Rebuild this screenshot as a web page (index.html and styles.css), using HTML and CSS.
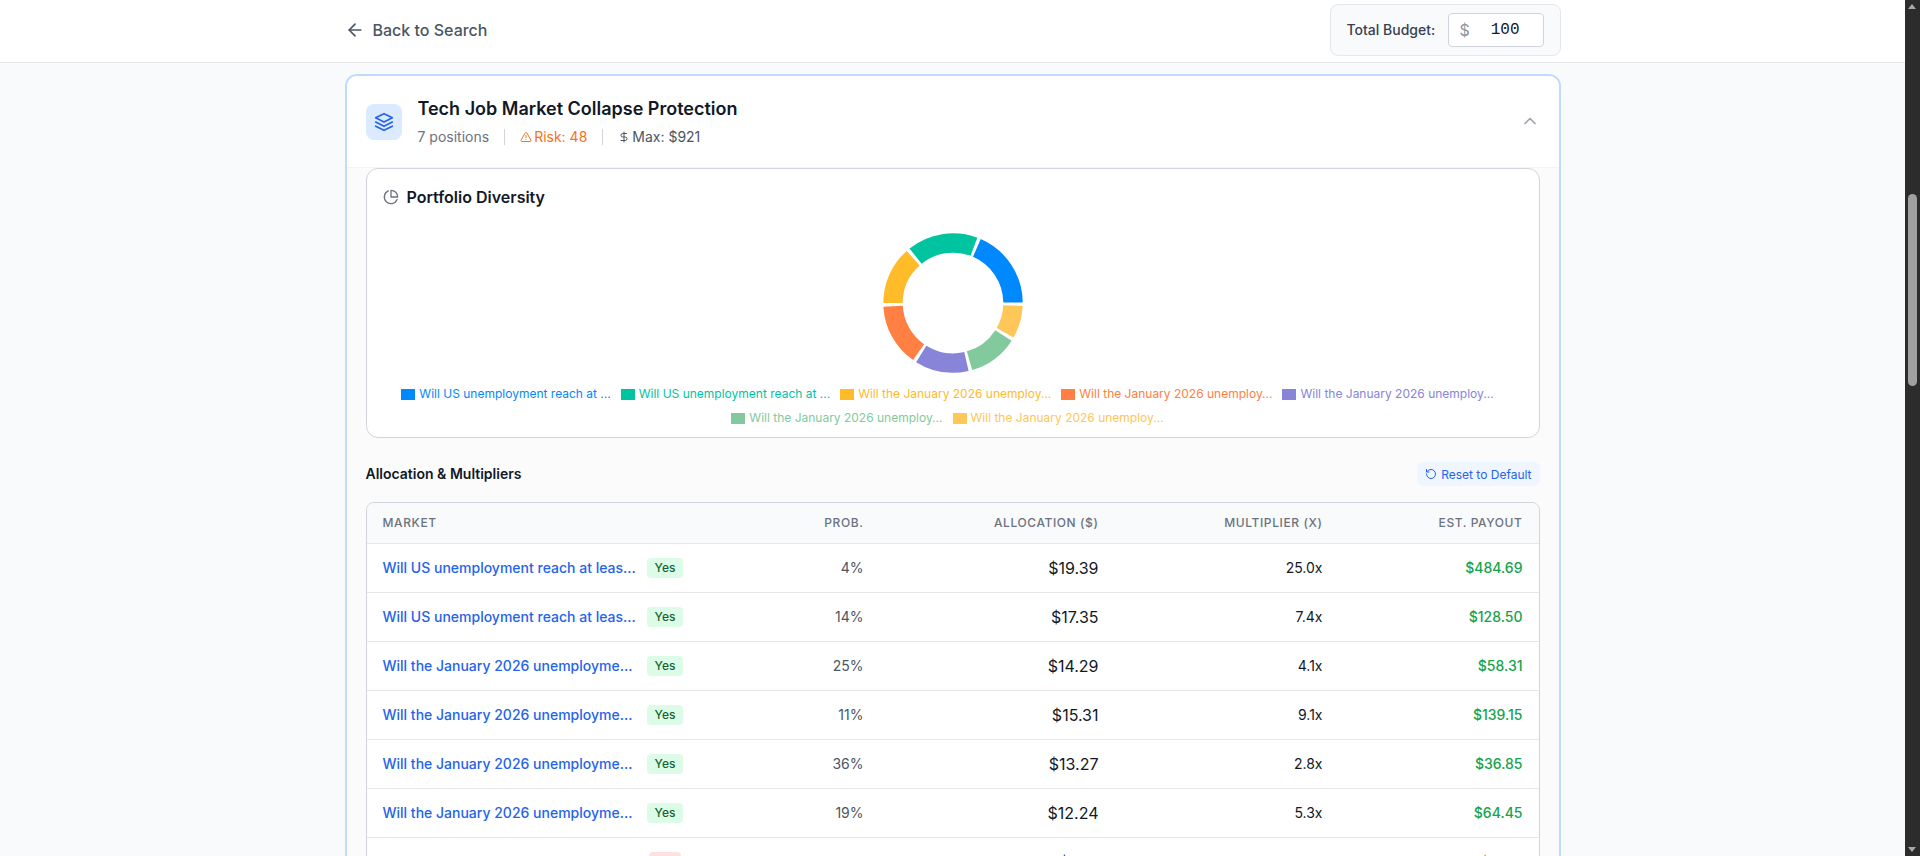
FILE: index.html
```html
<!DOCTYPE html>
<html lang="en">
<head>
<meta charset="utf-8">
<title>Tech Job Market Collapse Protection</title>
<link rel="stylesheet" href="styles.css">
</head>
<body>
<div class="window">
  <div class="page">
    <header class="topbar">
      <div class="topbar-inner">
        <a class="back">
          <svg class="ico-20" viewBox="0 0 24 24"><path d="m12 19-7-7 7-7"/><path d="M19 12H5"/></svg>
          <span>Back to Search</span>
        </a>
        <div class="budget">
          <span class="budget-label">Total Budget:</span>
          <div class="budget-input"><span class="budget-cur">$</span><span class="budget-val">100</span></div>
        </div>
      </div>
    </header>
    <main class="main">
      <section class="card">
        <div class="card-head">
          <div class="card-icon">
            <svg class="ico-20" viewBox="0 0 24 24"><path d="M12 2 2 7l10 5 10-5-10-5z"/><path d="m2 17 10 5 10-5"/><path d="m2 12 10 5 10-5"/></svg>
          </div>
          <div class="card-titles">
            <h2 class="card-title">Tech Job Market Collapse Protection</h2>
            <div class="meta">
              <span class="meta-muted">7 positions</span>
              <span class="meta-sep"></span>
              <span class="meta-item risk">
                <svg class="ico-12" viewBox="0 0 24 24"><path d="m21.73 18-8-14a2 2 0 0 0-3.48 0l-8 14A2 2 0 0 0 4 21h16a2 2 0 0 0 1.73-3"/><path d="M12 9v4"/><path d="M12 17h.01"/></svg>
                Risk: 48
              </span>
              <span class="meta-sep"></span>
              <span class="meta-item max">
                <svg class="ico-12" viewBox="0 0 24 24"><path d="M12 2v20"/><path d="M17 5H9.5a3.5 3.5 0 0 0 0 7h5a3.5 3.5 0 0 1 0 7H6"/></svg>
                Max: $921
              </span>
            </div>
          </div>
          <svg class="chevron" viewBox="0 0 24 24"><path d="m18 15-6-6-6 6"/></svg>
        </div>
        <div class="card-body">
          <div class="panel">
            <div class="panel-title">
              <svg class="ico-16" viewBox="0 0 24 24"><path d="M21.21 15.89A10 10 0 1 1 8 2.83"/><path d="M22 12A10 10 0 0 0 12 2v10z"/></svg>
              <span>Portfolio Diversity</span>
            </div>
            <div class="donut-wrap">
              <svg class="donut" viewBox="0 0 140 140">
                <circle class="seg seg-1" cx="70" cy="70" r="60" pathLength="360" stroke-dasharray="66.09 293.91" transform="rotate(-66.59 70 70)"/>
                <circle class="seg seg-2" cx="70" cy="70" r="60" pathLength="360" stroke-dasharray="59.03 300.97" transform="rotate(-128.62 70 70)"/>
                <circle class="seg seg-3" cx="70" cy="70" r="60" pathLength="360" stroke-dasharray="48.44 311.56" transform="rotate(-180.06 70 70)"/>
                <circle class="seg seg-4" cx="70" cy="70" r="60" pathLength="360" stroke-dasharray="51.97 308.03" transform="rotate(-235.03 70 70)"/>
                <circle class="seg seg-5" cx="70" cy="70" r="60" pathLength="360" stroke-dasharray="44.91 315.09" transform="rotate(-282.94 70 70)"/>
                <circle class="seg seg-6" cx="70" cy="70" r="60" pathLength="360" stroke-dasharray="41.35 318.65" transform="rotate(-327.29 70 70)"/>
                <circle class="seg seg-7" cx="70" cy="70" r="60" pathLength="360" stroke-dasharray="27.2 332.8" transform="rotate(-357.49 70 70)"/>
              </svg>
            </div>
            <ul class="legend">
              <li class="legend-item c1"><i class="swatch"></i>Will US unemployment reach at ...</li>
              <li class="legend-item c2"><i class="swatch"></i>Will US unemployment reach at ...</li>
              <li class="legend-item c3"><i class="swatch"></i>Will the January 2026 unemploy...</li>
              <li class="legend-item c4"><i class="swatch"></i>Will the January 2026 unemploy...</li>
              <li class="legend-item c5"><i class="swatch"></i>Will the January 2026 unemploy...</li>
              <li class="legend-item c6"><i class="swatch"></i>Will the January 2026 unemploy...</li>
              <li class="legend-item c7"><i class="swatch"></i>Will the January 2026 unemploy...</li>
            </ul>
          </div>
          <div class="alloc-head">
            <h3 class="alloc-title">Allocation &amp; Multipliers</h3>
            <button class="reset">
              <svg class="ico-12" viewBox="0 0 24 24"><path d="M3 12a9 9 0 1 0 9-9 9.75 9.75 0 0 0-6.74 2.74L3 8"/><path d="M3 3v5h5"/></svg>
              Reset to Default
            </button>
          </div>
          <div class="table-box">
            <table class="table">
              <colgroup><col class="col-market"><col class="col-prob"><col class="col-alloc"><col class="col-mult"><col class="col-pay"></colgroup>
              <thead>
                <tr><th class="left">Market</th><th>Prob.</th><th>Allocation ($)</th><th>Multiplier (x)</th><th>Est. Payout</th></tr>
              </thead>
              <tbody>
                <tr><td class="left"><div class="market"><a class="market-name">Will US unemployment reach at leas...</a><span class="slot"><span class="badge yes">Yes</span></span></div></td><td class="prob">4%</td><td class="alloc">$19.39</td><td class="mult">25.0x</td><td class="pay">$484.69</td></tr>
                <tr><td class="left"><div class="market"><a class="market-name">Will US unemployment reach at leas...</a><span class="slot"><span class="badge yes">Yes</span></span></div></td><td class="prob">14%</td><td class="alloc">$17.35</td><td class="mult">7.4x</td><td class="pay">$128.50</td></tr>
                <tr><td class="left"><div class="market"><a class="market-name">Will the January 2026 unemployme...</a><span class="slot"><span class="badge yes">Yes</span></span></div></td><td class="prob">25%</td><td class="alloc">$14.29</td><td class="mult">4.1x</td><td class="pay">$58.31</td></tr>
                <tr><td class="left"><div class="market"><a class="market-name">Will the January 2026 unemployme...</a><span class="slot"><span class="badge yes">Yes</span></span></div></td><td class="prob">11%</td><td class="alloc">$15.31</td><td class="mult">9.1x</td><td class="pay">$139.15</td></tr>
                <tr><td class="left"><div class="market"><a class="market-name">Will the January 2026 unemployme...</a><span class="slot"><span class="badge yes">Yes</span></span></div></td><td class="prob">36%</td><td class="alloc">$13.27</td><td class="mult">2.8x</td><td class="pay">$36.85</td></tr>
                <tr><td class="left"><div class="market"><a class="market-name">Will the January 2026 unemployme...</a><span class="slot"><span class="badge yes">Yes</span></span></div></td><td class="prob">19%</td><td class="alloc">$12.24</td><td class="mult">5.3x</td><td class="pay">$64.45</td></tr>
                <tr><td class="left"><div class="market"><a class="market-name">Will the January 2026 unemployme...</a><span class="slot"><span class="badge no">No</span></span></div></td><td class="prob">72%</td><td class="alloc">$8.15</td><td class="mult">1.4x</td><td class="pay">$11.32</td></tr>
              </tbody>
            </table>
          </div>
        </div>
      </section>
    </main>
  </div>
  <aside class="scrollbar">
    <span class="arrow-up"></span>
    <span class="thumb"></span>
    <span class="arrow-down"></span>
  </aside>
</div>
</body>
</html>
```
FILE: styles.css
```css
* { box-sizing: border-box; }
html, body { margin: 0; padding: 0; height: 856px; overflow: hidden; }
body { font-family: Inter, "Liberation Sans", sans-serif; background: #f9fafb; color: #111827; }
svg { fill: none; stroke: currentColor; stroke-width: 2; stroke-linecap: round; stroke-linejoin: round; flex: none; display: block; }
.ico-20 { width: 20px; height: 20px; }
.ico-16 { width: 16px; height: 16px; }
.ico-14 { width: 14px; height: 14px; }
.ico-12 { width: 12px; height: 12px; }

.window { display: flex; height: 856px; overflow: hidden; }
.page { flex: 1; min-width: 0; height: 856px; overflow: hidden; }

.topbar { height: 63px; padding-bottom: 2px; background: #fff; border-bottom: 1px solid #e5e7eb; }
.topbar-inner { width: 1216px; margin: 0 auto; height: 60px; display: flex; align-items: center; justify-content: space-between; }
.back { display: flex; align-items: center; gap: 8px; font-size: 16px; line-height: 24px; font-weight: 500; color: #4b5563; }
.budget { width: 231px; height: 52px; display: flex; align-items: center; justify-content: space-between; padding: 0 16px; background: #f9fafb; border: 1px solid #e5e7eb; border-radius: 8px; }
.budget-label { font-size: 14px; line-height: 20px; font-weight: 500; color: #374151; white-space: nowrap; }
.budget-input { width: 96px; height: 34px; display: flex; align-items: center; gap: 21px; padding-left: 11px; background: #fff; border: 1px solid #d1d5db; border-radius: 4px; }
.budget-cur { font-size: 16px; color: #8b93a1; }
.budget-val { font-family: "Liberation Mono", monospace; font-size: 16px; font-weight: 400; color: #111827; }

.main { width: 1216px; margin: 0 auto; padding-top: 11px; }
.card { background: #fff; border: 2px solid #bfdbfe; border-radius: 12px; overflow: hidden; }
.card-head { height: 92px; display: flex; align-items: center; gap: 16px; padding: 0 19px; background: #fff; border-bottom: 1px solid #f3f4f6; }
.card-icon { width: 36px; height: 36px; display: flex; align-items: center; justify-content: center; background: #dbeafe; color: #2563eb; border-radius: 8px; flex: none; }
.card-titles { flex: 1; min-width: 0; }
.card-title { margin: 0 0 5px; font-size: 18px; line-height: 26px; font-weight: 600; color: #111827; }
.meta { display: flex; align-items: center; gap: 15px; font-size: 14px; line-height: 20px; }
.meta-muted { color: #6b7280; }
.meta-sep { width: 1px; height: 16px; background: #d1d5db; }
.meta-item { display: flex; align-items: center; gap: 2px; }
.risk { color: #f97316; }
.max { color: #4b5563; }
.chevron { width: 20px; height: 20px; margin-bottom: 2px; color: #9ca3af; }

.card-body { padding: 0 19px 24px; background: #fbfbfc; }
.panel { background: #fff; border: 1px solid #d1d5db; border-radius: 12px; padding: 16px 16px 7px; height: 270px; }
.panel-title { display: flex; align-items: center; gap: 8px; font-size: 16px; line-height: 24px; font-weight: 600; color: #111827; }
.panel-title svg { color: #6b7280; }
.donut-wrap { margin-top: 24px; display: flex; justify-content: center; }
.donut { width: 140px; height: 140px; }
.seg { stroke-width: 19.4; stroke-linecap: butt; fill: none; }
.seg-1 { stroke: #0088fe; }
.seg-2 { stroke: #00c49f; }
.seg-3 { stroke: #ffbb28; }
.seg-4 { stroke: #ff8042; }
.seg-5 { stroke: #8884d8; }
.seg-6 { stroke: #82ca9d; }
.seg-7 { stroke: #ffc658; }
.legend { list-style: none; margin: 9px 0 0; padding: 0; display: flex; flex-wrap: wrap; justify-content: center; }
.legend-item { display: flex; align-items: center; gap: 4px; margin-right: 10px; font-size: 12px; line-height: 24px; white-space: nowrap; }
.swatch { width: 14px; height: 11px; background: currentColor; display: block; }
.c1 { color: #0088fe; }
.c2 { color: #00c49f; }
.c3 { color: #ffbb28; }
.c4 { color: #ff8042; }
.c5 { color: #8884d8; }
.c6 { color: #82ca9d; }
.c7 { color: #ffc658; }

.alloc-head { margin-top: 24px; height: 24px; display: flex; align-items: center; justify-content: space-between; }
.alloc-title { margin: 0; font-size: 14px; line-height: 20px; font-weight: 600; color: #111827; }
.reset { height: 24px; display: flex; align-items: center; gap: 4px; padding: 0 8px; background: #eff6ff; border: 0; border-radius: 6px; font-family: inherit; font-size: 12px; font-weight: 400; color: #2563eb; }

.table-box { margin-top: 16px; background: #fff; border: 1px solid #d1d5db; border-radius: 8px; overflow: hidden; }
.table { width: 1172px; border-collapse: collapse; table-layout: fixed; }
.col-market { width: 333px; }
.col-prob { width: 180px; }
.col-alloc { width: 235px; }
.col-mult { width: 224px; }
.col-pay { width: 200px; }
.table th { height: 40px; padding: 0 16px; text-align: right; font-size: 12px; font-weight: 500; letter-spacing: 0.05em; text-transform: uppercase; color: #6b7280; background: #f9fafb; border-bottom: 1px solid #e5e7eb; }
.table td { height: 49px; padding: 0 16px; text-align: right; border-bottom: 1px solid #e5e7eb; font-size: 14px; }
.table .left { text-align: left; padding-right: 0; }
.market { display: flex; align-items: center; }
.market-name { width: 258px; flex: none; font-size: 14px; font-weight: 500; color: #2563eb; white-space: nowrap; }
.slot { width: 49px; display: flex; justify-content: center; flex: none; }
.badge { height: 20px; padding: 0 8px; border-radius: 4px; font-size: 12px; line-height: 20px; font-weight: 500; }
.yes { background: #dcfce7; color: #166534; }
.no { background: #fee2e2; color: #991b1b; }
.prob { color: #4b5563; }
.table .alloc { font-size: 16px; color: #111827; }
.mult { color: #111827; }
.pay { color: #16a34a; font-weight: 500; }

.scrollbar { position: relative; width: 15px; flex: none; background: #2c2c2c; }
.thumb { position: absolute; left: 3px; top: 194px; width: 9px; height: 192px; border-radius: 5px; background: #a0a0a0; }
.arrow-up, .arrow-down { position: absolute; left: 3px; width: 0; height: 0; border-left: 4.5px solid transparent; border-right: 4.5px solid transparent; }
.arrow-up { top: 4px; border-bottom: 5px solid #a8a8a8; }
.arrow-down { bottom: 4px; border-top: 5px solid #a8a8a8; }
```
